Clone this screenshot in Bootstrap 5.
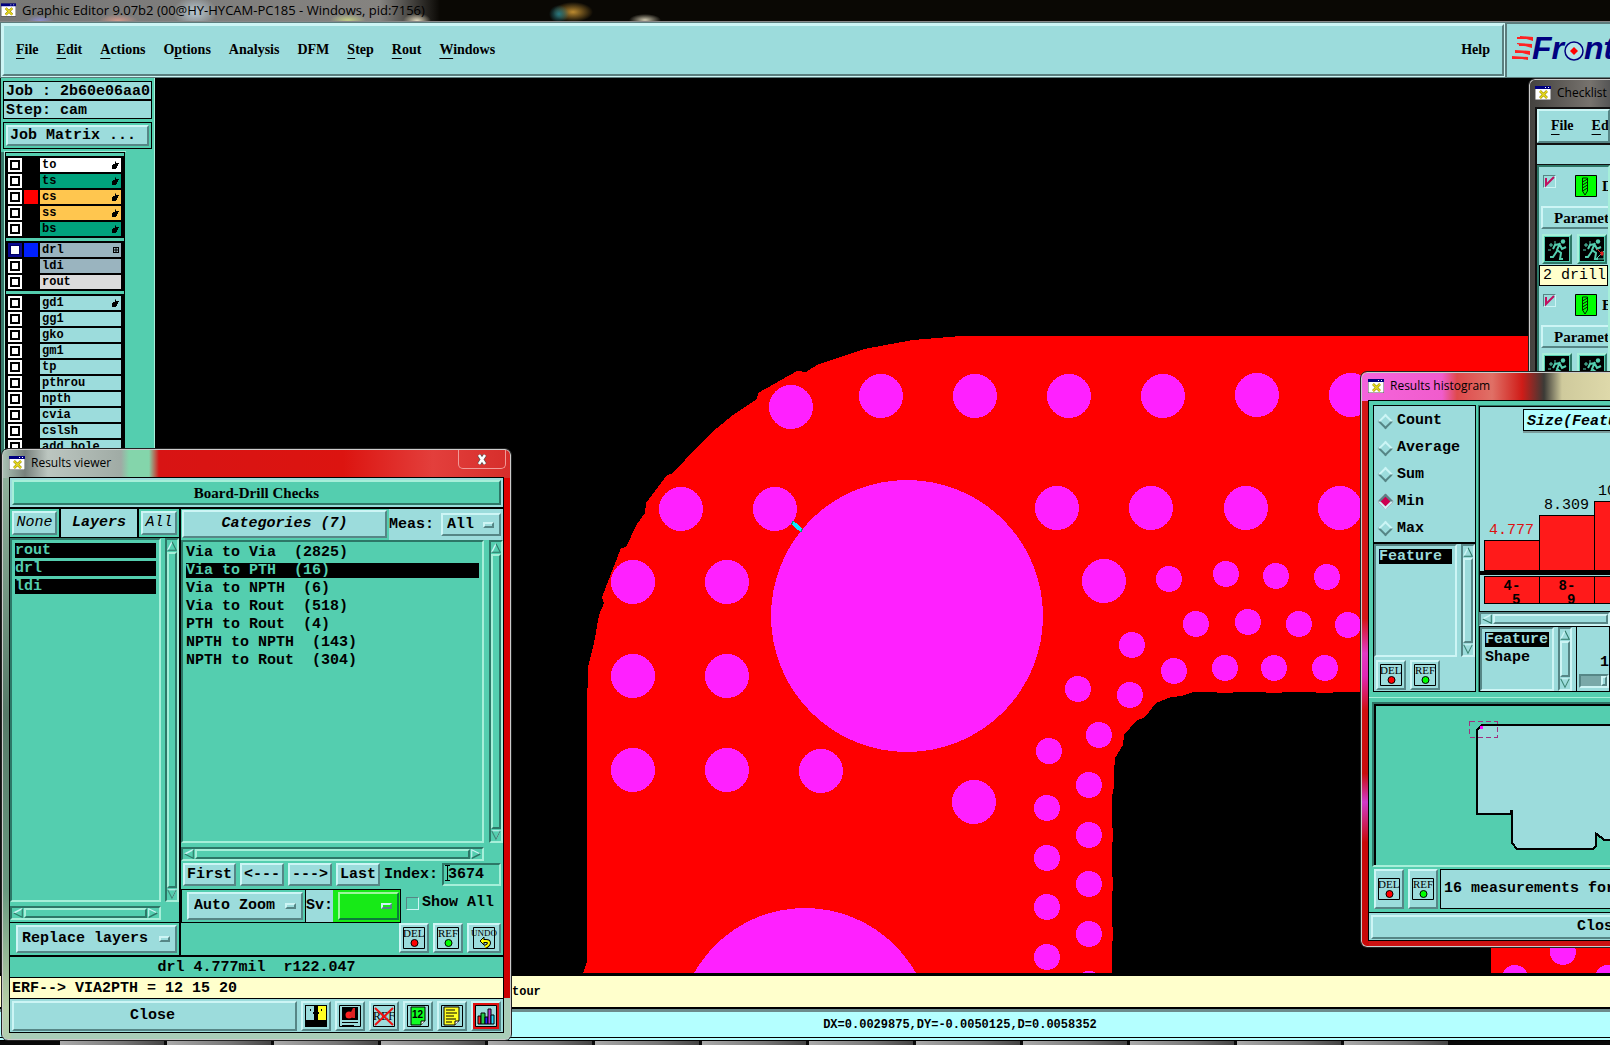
<!DOCTYPE html>
<html lang="en">
<head>
<meta charset="utf-8">
<meta name="viewport" content="width=device-width, initial-scale=1">
<title>Graphic Editor</title>
<link href="https://cdn.jsdelivr.net/npm/bootstrap@5.3.0/dist/css/bootstrap.min.css" rel="stylesheet">
<style>
:root{--teal:#54ceaf;--teal-lt:#a6efd9;--teal-dk:#2d7767;--cy:#9cdcdc;--cy-lt:#cdf5f5;--cy-dk:#568686;--cream:#ffffcc}
*{border-radius:0}
body{height:100vh;margin:0;overflow:hidden;background:#000;color:#000;font:bold 15px/18px "Liberation Mono",monospace;position:relative}
button,input,select{font:inherit;color:inherit;padding:0;margin:0}
a{color:inherit;text-decoration:none}
.serif{font:bold 14px/18px "Liberation Serif",serif}
.serif-lg{font:bold 15px/18px "Liberation Serif",serif}
.sys{font:13px/18px "Open Sans",sans-serif}
.menu-gap{gap:18px}
u{text-underline-offset:4px;text-decoration-thickness:1px}
.cyan{background:var(--cy)}
.teal{background:var(--teal)}
.cream{background:var(--cream)}
.up{border:2px solid;border-color:var(--cy-lt) var(--cy-dk) var(--cy-dk) var(--cy-lt);background:var(--cy)}
.up-t{border:2px solid;border-color:var(--teal-lt) var(--teal-dk) var(--teal-dk) var(--teal-lt);background:var(--teal)}
.down-t{border:2px solid;border-color:var(--teal-dk) var(--teal-lt) var(--teal-lt) var(--teal-dk);background:var(--teal)}
.down{border:2px solid;border-color:var(--cy-dk) var(--cy-lt) var(--cy-lt) var(--cy-dk);background:var(--cy)}
.line{border:1px solid #000}
.clip{overflow:hidden;min-width:0;min-height:0}
.tl{white-space:pre}
.fill{min-width:0;min-height:0;flex:1 1 0}
svg{display:block;flex:none}

/* main window */
.app-title{height:21px;padding:0 0 2px 1px;gap:6px;background:
 radial-gradient(14px 8px at 417px 21px,#e6dcc0,transparent),
 radial-gradient(16px 6px at 645px 20px,#cfc8b0,transparent),
 radial-gradient(10px 9px at 559px 14px,#267780,transparent),
 radial-gradient(20px 10px at 573px 12px,#bb8a30,transparent),
 radial-gradient(20px 7px at 118px 21px,#d59a8c,transparent),
 radial-gradient(14px 6px at 40px 21px,#8e8ed0,transparent),
 radial-gradient(18px 6px at 348px 20px,#c2cc85,transparent),
 radial-gradient(22px 16px at 195px 12px,#b9c9d2,transparent),
 linear-gradient(90deg,#777 0,#858380 380px,#0a0804 440px)}
.app-menu{height:57px;border-top:1px solid #888;background:#5c7c7c}
.app-menu .bar{border:2px solid;border-color:var(--cy-lt) #5a7f7f #5a7f7f var(--cy-lt);outline:1px solid var(--cy-lt);margin:2px 1px 2px 2px;padding:0 12px}
.logo-box{width:103px;margin:2px 0 1px 2px}
.side{width:155px;background:var(--teal);border-left:1px solid #111;padding:3px 2px 0;border-right:1px solid var(--teal-lt)}
.side .info{height:19px;flex:none;border:1px solid #000;padding-left:2px;line-height:19px}
.matrix{height:27px;padding:2px;margin-top:3px}
.matrix button{text-align:left;padding-left:2px;line-height:18px}
.layer-wrap{margin:3px -2px 0 -2px;background:#37796a;padding-left:4px}
.layer-pane{width:120px;padding:3px 0 0;border:1px solid #000;border-bottom:0;outline:1px solid var(--teal-lt)}
.layer-grp{background:#000;padding:2px;gap:2px;margin-bottom:3px}
.layer-grp label{height:14px;gap:2px;font-size:12px;line-height:15px}
.layer-grp label .tag{width:81px;padding:0 2px 0 2px;background:var(--cy)}
.layer-grp label .sw{width:14px}
.layer-grp input{appearance:none;width:14px;height:14px;border:2px solid #fff;background:linear-gradient(#fff,#fff) center/6px 6px no-repeat,#000}
.layer-grp input:checked{border-color:#0a0a90;background:linear-gradient(#fff,#fff) center/8px 8px no-repeat,#000066}
.l-white .tag{background:#fff!important}.l-green .tag{background:#00a37d!important}.l-org .tag{background:#ffc64f!important}
.l-gray .tag{background:#9ab4bf!important}.l-pale .tag{background:#dcdcdc!important}
.msg{height:31px;margin-top:3px;padding:0 0 0 512px;font-size:12px;line-height:32px}
.stat{height:32px;margin-top:2px;background:#b4ffff;border-top:3px solid #6c8c8c;border-bottom:4px double #000;font-size:12px;padding-left:310px}
.task{height:4px;padding-left:60px;gap:3px;background:#090909}
.task i{flex:0 0 104px;background:linear-gradient(90deg,#aaa,#777 60%,#444)}

/* floating windows */
.win{position:absolute;border-radius:6px;overflow:hidden;border:1px solid #ccc;outline:1px solid #222;display:flex;flex-direction:column}
.win .cap{height:27px;flex:none;gap:6px;padding-bottom:2px}
.win .cap.sys,.win .cap .sys{font-size:12px}
.w-res{left:2px;top:449px;bottom:5px;width:509px;padding:0 6px 6px;
 background:linear-gradient(#d00,#c00) right 0 top 28px/8px 520px no-repeat,
 linear-gradient(#8fb09a,#567a68 40%,#69987f 70%,#b8cfa8 90%,#a7cdb6) left 0 top 28px/8px 100% no-repeat,
 linear-gradient(90deg,#a9bfb2 0,#77807c 22px,#bcc6c0 45px,#a0aba5 118px,#84d5ab 126px,#84d5ab 146px,#d81414 156px,#dc1410 340px,#e33f3c 430px,#d62e2b) top/100% 28px no-repeat,#a9cdb8}
.w-chk{left:1529px;top:79px;right:0;height:330px;padding-left:5px;border-right:0;border-radius:6px 0 0 0;background:linear-gradient(90deg,#44423f,#77736e 60px,#555),#333;background-color:#222}
.w-his{left:1361px;top:372px;right:0;bottom:98px;padding:0 0 5px 6px;border-right:0;border-radius:6px 0 0 6px;
 background:linear-gradient(#d31616 0,#d31616 38%,#e23ac4 44%,#e028b4 48%,#d01010 54%,#c80c0c 65%,#d03ac8 70%,#c80808 77%) left 0 top 28px/7px 100% no-repeat,
 linear-gradient(90deg,#f564dc 0,#f05ccc 80px,#df4a4c 95px,#e07066 130px,#d01c18 160px,#3b3a36 182px,#cfca9c 200px,#ded9aa) top/100% 28px no-repeat,#cc1111}
.xbtn{width:48px;height:19px;border:1px solid #f09a98;border-top:0;border-radius:0 0 5px 5px;background:transparent;margin-right:-2px;align-self:flex-start}
.client{border:1px solid #000;background:#000;gap:2px}
.client.teal{background:var(--teal)}
.opt{position:relative}
.opt select{appearance:none;width:100%;height:100%;border:0;background:transparent;outline:0}
.opt::after{content:"";position:absolute;right:5px;top:50%;width:11px;height:6px;margin-top:-3px;border:2px solid;border-color:var(--cy-lt) var(--cy-dk) var(--cy-dk) var(--cy-lt);pointer-events:none}
.hl{background:#000;color:var(--teal)}
.items{margin:0;padding:3px 3px}
.items li{height:15px;line-height:15px;margin-bottom:3px;white-space:pre}
.w13{width:14px}.h13{height:14px}
.grn{background:#17ea17;border-color:#9df79d #0b7c3a #0b7c3a #9df79d}
.ic{width:30px;height:30px;display:flex;align-items:center;justify-content:center;flex:none}
.stats label{height:27px;gap:6px}
.dia{appearance:none;width:11px;height:11px;border:2px solid;border-color:var(--cy-lt) var(--cy-dk) var(--cy-dk) var(--cy-lt);transform:rotate(45deg)}
.dia:checked{background:#cc0050;border-color:var(--cy-dk) var(--cy-lt) var(--cy-lt) var(--cy-dk)}
.bar-red{background:#ff1a1a;border:1px solid #000;border-right-width:0;width:55px;flex:none}
.col-bar{width:55px;flex:none}
.val{font-weight:400}
.bin{height:28px;line-height:14px;font-size:14px;padding-top:2px}
.tick{appearance:none;width:13px;height:13px;border:1px solid;border-color:var(--cy-dk) var(--cy-lt) var(--cy-lt) var(--cy-dk)}
.idx{width:59px;outline:0}
.chk-row{height:37px;padding-left:4px;gap:19px}
.chk-row label{margin-left:-14px}
.chk-par{height:23px;padding-left:11px;line-height:18px;margin:2px 0 0 2px}
.chk-run{height:36px;gap:5px;padding:5px 0 0 3px}
</style>
<script src="https://cdn.jsdelivr.net/npm/bootstrap@5.3.0/dist/js/bootstrap.bundle.min.js"></script>
</head>
<body class="d-flex flex-column">
<svg width="0" height="0" class="position-absolute" aria-hidden="true">
 <symbol id="win" viewBox="0 0 16 14"><path d="M0 0h16v14H0z" fill="#fff" stroke="#555"/><path d="M0 0h16v3H0z" fill="#000080"/><path d="M10 1h1v1h-1zM13 1h1v1h-1z" fill="#fff"/><path d="M5 5l7 7M12 5l-7 7" stroke="#998800" stroke-width="2.500"/><path d="M5 5l7 7M12 5l-7 7" stroke="#e8dc20" stroke-width="1.500"/></symbol>
 <symbol id="hand" viewBox="0 0 8 8"><path d="M5 0v2h3v1H7v2H6v2H5v1H1V4h1V3h2V1z"/></symbol>
 <symbol id="grid" viewBox="0 0 6 6"><path d="M0 0h6v6H0z"/><path d="M1 1h1.500v1.500H1zM3.500 1H5v1.500H3.500zM1 3.500h1.500V5H1zM3.500 3.500H5V5H3.500z" fill="#9ab4bf"/></symbol>
 <symbol id="up" viewBox="0 0 14 14"><path d="M7 1L1 13" stroke="#cdf5f5" stroke-width="2"/><path d="M7 1l6 12H1" fill="none" stroke="#2d7767" stroke-width="1.500"/></symbol>
 <symbol id="dn" viewBox="0 0 14 14"><path d="M1 1h12L7 13" fill="none" stroke="#cdf5f5" stroke-width="1.500"/><path d="M1 1l6 12L13 1" fill="none" stroke="#3d8777" stroke-width="1.500"/></symbol>
 <symbol id="lf" viewBox="0 0 14 14"><path d="M13 1L1 7" stroke="#cdf5f5" stroke-width="2"/><path d="M13 1v12L1 7" fill="none" stroke="#2d7767" stroke-width="1.500"/></symbol>
 <symbol id="rt" viewBox="0 0 14 14"><path d="M1 13V1l12 6" fill="none" stroke="#cdf5f5" stroke-width="1.500"/><path d="M1 13l12-6" stroke="#2d7767" stroke-width="2"/></symbol>
 <symbol id="run" viewBox="0 0 24 24"><path d="M0 0h24v24H0z"/><path d="M15 6l-3 7 4 3-1 6h3M12 14l-4 6H5M15 7l-5 1-2 4M15 8l2 4 4-2" fill="none" stroke="#54ceaf" stroke-width="2"/><circle cx="18" cy="4.500" r="2.200" fill="#54ceaf"/><path d="M4 8h4M6 6v4M10 4v3M3 13h3" stroke="#54ceaf"/></symbol>
 <symbol id="drill" viewBox="0 0 22 22"><path d="M.500.500h21v21H.500z" fill="#0f0" stroke="#000"/><path d="M7.500 3h5v13l-2.500 4-2.500-4zM7.500 7l5-3M7.500 10l5-3M7.500 13l5-3M7.500 16l5-3" fill="none" stroke="#020"/></symbol>
</svg>

<header class="app-title d-flex align-items-center sys flex-shrink-0"><svg width="15" height="14"><use href="#win"/></svg><span class="text-nowrap">Graphic Editor 9.07b2 (00@HY-HYCAM-PC185 - Windows, pid:7156)</span></header>
<nav class="app-menu d-flex flex-shrink-0 serif">
 <div class="bar cyan flex-grow-1 d-flex align-items-center menu-gap">
  <a href="#"><u>F</u>ile</a><a href="#"><u>E</u>dit</a><a href="#"><u>A</u>ctions</a><a href="#">O<u>p</u>tions</a><a href="#">Analysis</a><a href="#">DFM</a><a href="#"><u>S</u>tep</a><a href="#"><u>R</u>out</a><a href="#"><u>W</u>indows</a><a href="#" class="ms-auto">Help</a>
 </div>
 <div class="logo-box cyan clip"><svg width="103" height="52" viewBox="0 0 103 52"><path d="M26 13L13 12v1l13 4zM25 20L10 19v1l15 4zM23 27L8 26v1l15 4zM21 33L5 32v1l16 3z" fill="#f22"/><path d="M10 14h16M12 21h12M8 28h14M5 34h16" stroke="#f22" stroke-width="2"/><text x="25" y="35" font-family="Liberation Sans,sans-serif" font-weight="700" font-style="italic" font-size="32" fill="#000080">Fr</text><circle cx="67" cy="27" r="9" fill="#b4e4e8" stroke="#000080" stroke-width="1.500"/><path d="M67 23l4 4-4 4-4-4z" fill="#f00"/><text x="77" y="35" font-family="Liberation Sans,sans-serif" font-weight="700" font-style="italic" font-size="32" fill="#000080">nt</text></svg></div>
</nav>

<main class="d-flex fill">
 <aside class="side d-flex flex-column flex-shrink-0 clip">
  <div class="info cyan tl">Job : 2b60e06aa0</div>
  <div class="info cyan tl">Step: cam</div>
  <div class="matrix line teal d-flex flex-shrink-0"><button type="button" class="up flex-grow-1">Job Matrix ...</button></div>
  <div class="layer-wrap d-flex fill">
   <div class="layer-pane teal clip">
    <div class="layer-grp d-flex flex-column">
     <label class="d-flex l-white"><input type="checkbox"><span class="sw"></span><span class="tag d-flex align-items-center">to<svg class="ms-auto" width="8" height="8"><use href="#hand"/></svg></span></label>
     <label class="d-flex l-green"><input type="checkbox"><span class="sw"></span><span class="tag d-flex align-items-center">ts<svg class="ms-auto" width="8" height="8"><use href="#hand"/></svg></span></label>
     <label class="d-flex l-org"><input type="checkbox"><span class="sw" style="background:#f00"></span><span class="tag d-flex align-items-center">cs<svg class="ms-auto" width="8" height="8"><use href="#hand"/></svg></span></label>
     <label class="d-flex l-org"><input type="checkbox"><span class="sw"></span><span class="tag d-flex align-items-center">ss<svg class="ms-auto" width="8" height="8"><use href="#hand"/></svg></span></label>
     <label class="d-flex l-green"><input type="checkbox"><span class="sw"></span><span class="tag d-flex align-items-center">bs<svg class="ms-auto" width="8" height="8"><use href="#hand"/></svg></span></label>
    </div>
    <div class="layer-grp d-flex flex-column">
     <label class="d-flex l-gray"><input type="checkbox" checked><span class="sw" style="background:#0020ff"></span><span class="tag d-flex align-items-center">drl<svg class="ms-auto" width="6" height="6"><use href="#grid"/></svg></span></label>
     <label class="d-flex l-gray"><input type="checkbox"><span class="sw"></span><span class="tag">ldi</span></label>
     <label class="d-flex l-pale"><input type="checkbox"><span class="sw"></span><span class="tag">rout</span></label>
    </div>
    <div class="layer-grp d-flex flex-column">
     <label class="d-flex"><input type="checkbox"><span class="sw"></span><span class="tag d-flex align-items-center">gd1<svg class="ms-auto" width="8" height="8"><use href="#hand"/></svg></span></label>
     <label class="d-flex"><input type="checkbox"><span class="sw"></span><span class="tag">gg1</span></label>
     <label class="d-flex"><input type="checkbox"><span class="sw"></span><span class="tag">gko</span></label>
     <label class="d-flex"><input type="checkbox"><span class="sw"></span><span class="tag">gm1</span></label>
     <label class="d-flex"><input type="checkbox"><span class="sw"></span><span class="tag">tp</span></label>
     <label class="d-flex"><input type="checkbox"><span class="sw"></span><span class="tag">pthrou</span></label>
     <label class="d-flex"><input type="checkbox"><span class="sw"></span><span class="tag">npth</span></label>
     <label class="d-flex"><input type="checkbox"><span class="sw"></span><span class="tag">cvia</span></label>
     <label class="d-flex"><input type="checkbox"><span class="sw"></span><span class="tag">cslsh</span></label>
     <label class="d-flex"><input type="checkbox"><span class="sw"></span><span class="tag">add_hole</span></label>
    </div>
   </div>
   <div class="teal flex-grow-1"></div>
  </div>
 </aside>
 <svg class="fill h-100" viewBox="155 78 1455 895" preserveAspectRatio="xMinYMin slice" shape-rendering="crispEdges">
  <path fill="#f00" d="M1610 336H961L913 340 864 349 817 365 806 372 797 371 758 393 757 399 733 415 717 428 697 447 673 473 667 475 646 503 645 513 637 524 626 547 621 548 602 597 604 603 599 615 594 643 588 667 587 710V962L583 974H1112V943Q1115 934 1112 925V893Q1115 884 1112 875V844Q1115 835 1112 826V797Q1115 785 1114 773L1115 758 1123 745 1124 735 1136 721 1145 717 1156 703 1171 697 1182 696 1193 692H1215Q1225 695 1235 692H1264Q1274 695 1284 692H1314Q1325 695 1335 692H1610z"/>
  <path fill="#f00" d="M1491 900h119v74h-119z"/>
  <g fill="#ff20ff">
   <circle cx="907" cy="616" r="136"/><circle cx="805" cy="1035" r="127"/>
   <circle cx="791" cy="407" r="22"/><circle cx="881" cy="396" r="22"/><circle cx="975" cy="396" r="22"/><circle cx="1069" cy="396" r="22"/><circle cx="1163" cy="396" r="22"/><circle cx="1257" cy="395" r="22"/><circle cx="1351" cy="395" r="22"/>
   <circle cx="681" cy="509" r="22"/><circle cx="775" cy="509" r="22"/><circle cx="1057" cy="508" r="22"/><circle cx="1151" cy="508" r="22"/><circle cx="1246" cy="508" r="22"/><circle cx="1340" cy="508" r="22"/>
   <circle cx="633" cy="582" r="22"/><circle cx="727" cy="582" r="22"/><circle cx="633" cy="676" r="22"/><circle cx="727" cy="676" r="22"/><circle cx="633" cy="770" r="22"/><circle cx="727" cy="770" r="22"/><circle cx="821" cy="771" r="22"/><circle cx="974" cy="802" r="22"/><circle cx="1104" cy="581" r="22"/>
   <circle cx="1169" cy="579" r="13"/><circle cx="1226" cy="574" r="13"/><circle cx="1276" cy="576" r="13"/><circle cx="1327" cy="577" r="13"/>
   <circle cx="1196" cy="624" r="13"/><circle cx="1248" cy="622" r="13"/><circle cx="1299" cy="624" r="13"/><circle cx="1348" cy="625" r="13"/>
   <circle cx="1132" cy="645" r="13"/><circle cx="1174" cy="671" r="13"/><circle cx="1225" cy="668" r="13"/><circle cx="1274" cy="668" r="13"/><circle cx="1325" cy="668" r="13"/>
   <circle cx="1078" cy="689" r="13"/><circle cx="1130" cy="695" r="13"/><circle cx="1099" cy="735" r="13"/><circle cx="1049" cy="751" r="13"/>
   <circle cx="1089" cy="785" r="13"/><circle cx="1047" cy="808" r="13"/><circle cx="1089" cy="835" r="13"/><circle cx="1047" cy="858" r="13"/><circle cx="1089" cy="884" r="13"/><circle cx="1047" cy="907" r="13"/><circle cx="1089" cy="934" r="13"/><circle cx="1047" cy="957" r="13"/><circle cx="1089" cy="984" r="13"/>
   <circle cx="1563" cy="952" r="13"/><circle cx="1515" cy="978" r="13"/><circle cx="1608" cy="978" r="13"/>
  </g>
  <path d="M792 522l10 9" stroke="#00a870" stroke-width="3"/><path d="M793 523l8 7" stroke="#10e8ff" stroke-width="4"/>
 </svg>
</main>
<div class="msg cream flex-shrink-0">tour</div>
<div class="stat d-flex align-items-center justify-content-center flex-shrink-0">DX=0.0029875,DY=-0.0050125,D=0.0058352</div>
<footer class="task d-flex flex-shrink-0 clip"><i></i><i></i><i></i><i></i><i></i><i></i><i></i><i></i><i></i><i></i><i></i><i></i><i></i></footer>

<!-- Checklist -->
<section class="win w-chk">
 <div class="cap d-flex align-items-center sys"><svg width="16" height="14"><use href="#win"/></svg><span>Checklist</span></div>
 <div class="d-flex flex-column clip flex-grow-1" style="background:#111;padding:2px 0 0 2px">
  <nav class="up serif d-flex align-items-center menu-gap flex-shrink-0 clip" style="height:34px;padding-left:12px"><a href="#"><u>F</u>ile</a><a href="#"><u>E</u>dit</a></nav>
  <div class="cyan flex-shrink-0" style="height:19px;margin:2px 0 1px"></div>
  <div class="down-t clip flex-grow-1" style="background:var(--cy)">
   <div class="chk-row d-flex align-items-center serif-lg"><span class="position-relative mb-2"><input class="tick d-block" type="checkbox" id="c1" checked><svg class="position-absolute top-0 start-0" width="13" height="13"><path d="M3 3v7l8-8" fill="none" stroke="#c01060" stroke-width="2"/></svg></span><svg width="22" height="22"><use href="#drill"/></svg><label for="c1">Drill</label></div>
   <button type="button" class="chk-par up serif-lg w-100 text-start clip d-block">Parameters</button>
   <div class="chk-run d-flex"><button type="button" class="up-t ic" aria-label="Run"><svg width="24" height="24"><use href="#run"/></svg></button><button type="button" class="up-t ic" aria-label="Run area"><svg width="24" height="24"><use href="#run"/><path d="M24 14l-8 8h8z" fill="none" stroke="#54ceaf"/><path d="M17 12l6 6M21 15h2v3h-2z" fill="#d22" stroke="#d22"/></svg></button></div>
   <div class="cream line tl" style="height:21px;font-weight:400;padding-left:3px;line-height:19px">2 drill</div>
   <div class="chk-row d-flex align-items-center serif-lg"><span class="position-relative mb-2"><input class="tick d-block" type="checkbox" id="c2" checked><svg class="position-absolute top-0 start-0" width="13" height="13"><path d="M3 3v7l8-8" fill="none" stroke="#c01060" stroke-width="2"/></svg></span><svg width="22" height="22"><use href="#drill"/></svg><label for="c2">Board</label></div>
   <button type="button" class="chk-par up serif-lg w-100 text-start clip d-block">Parameters</button>
   <div class="chk-run d-flex"><button type="button" class="up-t ic" aria-label="Run"><svg width="24" height="24"><use href="#run"/></svg></button><button type="button" class="up-t ic" aria-label="Run area"><svg width="24" height="24"><use href="#run"/></svg></button></div>
  </div>
 </div>
</section>

<!-- Results histogram -->
<section class="win w-his">
 <div class="cap d-flex align-items-center sys"><svg width="16" height="14"><use href="#win"/></svg><span>Results histogram</span></div>
 <div class="client teal fill d-flex flex-column clip" style="gap:0;border-right:0">
  <div class="d-flex flex-shrink-0" style="height:297px;padding:4px 0 5px 4px;gap:2px;border-bottom:1px solid var(--teal-lt)">
   <div class="line cyan d-flex flex-column flex-shrink-0" style="width:103px">
    <div class="stats d-flex flex-column" style="height:138px;padding:2px 0 0 6px;border-bottom:2px solid #000">
     <label class="d-flex align-items-center"><input class="dia" type="radio" name="st">Count</label>
     <label class="d-flex align-items-center"><input class="dia" type="radio" name="st">Average</label>
     <label class="d-flex align-items-center"><input class="dia" type="radio" name="st">Sum</label>
     <label class="d-flex align-items-center"><input class="dia" type="radio" name="st" checked>Min</label>
     <label class="d-flex align-items-center"><input class="dia" type="radio" name="st">Max</label>
    </div>
    <div class="d-flex fill" style="gap:4px">
     <ul class="items list-unstyled down fill"><li class="hl" style="color:var(--cy)">Feature</li></ul>
     <div class="down w13 d-flex flex-column"><svg width="10" height="12"><use href="#up"/></svg><div class="up fill"></div><svg width="10" height="12"><use href="#dn"/></svg></div>
    </div>
    <div class="d-flex" style="gap:4px;padding:3px 2px 1px"><button type="button" class="up ic" aria-label="DEL"><svg width="24" height="24"><path d="M1.500 1.500h21v21h-21z" fill="none" stroke="#000"/><text x="1" y="11" font-family="Liberation Serif,serif" font-weight="400" font-size="11">DEL</text><circle cx="12.500" cy="17" r="3.500" fill="#f00" stroke="#000"/></svg></button><button type="button" class="up ic" aria-label="REF"><svg width="24" height="24"><path d="M1.500 1.500h21v21h-21z" fill="none" stroke="#000"/><text x="2" y="11" font-family="Liberation Serif,serif" font-weight="400" font-size="11">REF</text><circle cx="12.500" cy="17" r="3.500" fill="#0f0" stroke="#000"/></svg></button></div>
   </div>
   <div class="fill d-flex flex-column" style="background:var(--teal-dk);padding:1px 0 0 1px">
    <div class="cyan line d-flex flex-column clip" style="height:206px;border-right:0">
     <div class="d-flex" style="height:25px;padding:2px 0 0 43px"><div class="line text-nowrap fst-italic flex-shrink-0" style="background:#b4ffff;width:140px;height:22px;padding:3px 3px 0;box-shadow:0 2px 0 #7a9a9a">Size(Feature)</div></div>
     <div class="d-flex align-items-end flex-grow-1" style="padding-left:4px;border-bottom:4px solid #000">
      <div class="col-bar text-center"><div class="val" style="color:#d11">4.777</div><div class="bar-red" style="height:31px"></div></div>
      <div class="col-bar text-center"><div class="val">8.309</div><div class="bar-red" style="height:56px"></div></div>
      <div class="col-bar"><div class="val ps-1">10.</div><div class="bar-red" style="height:70px"></div></div>
     </div>
     <div class="d-flex" style="padding:1px 0 7px 4px"><div class="bar-red bin text-center tl">4-
 5</div><div class="bar-red bin text-center tl">8-
 9</div><div class="bar-red bin"></div></div>
    </div>
    <div class="down d-flex" style="height:14px"><svg width="12" height="10"><use href="#lf"/></svg><div class="up fill"></div></div>
    <div class="cyan d-flex flex-grow-1" style="border:1px solid #000;gap:4px">
     <ul class="items list-unstyled down flex-shrink-0" style="width:74px"><li class="hl" style="color:var(--cy)">Feature</li><li>Shape</li></ul>
     <div class="down w13 d-flex flex-column flex-shrink-0"><svg width="10" height="12"><use href="#up"/></svg><div class="up fill"></div><svg width="10" height="12"><use href="#dn"/></svg></div>
     <div class="fill d-flex flex-column justify-content-end clip" style="border-left:1px solid #000"><div style="padding-left:23px">1.</div><div class="down d-flex flex-shrink-0" style="height:14px;margin:2px 0 3px 2px;background:#7aa9a9"><div class="up" style="width:40px;margin-left:20px"></div></div></div>
    </div>
   </div>
  </div>
  <div class="down-t fill" style="margin:4px 0 2px 3px;border-right:0"><svg width="100%" height="100%" viewBox="1375 704 234 155" preserveAspectRatio="xMinYMin slice" shape-rendering="crispEdges"><path d="M1376 865V705h240" fill="none" stroke="#000" stroke-width="2"/><path d="M1620 724H1479l-5 5v81h33v-3h1v31l5 6h72l4-4v-11l8 6h23z" fill="#9cdcdc" stroke="#000" stroke-width="2"/><path d="M1467 721h27v15h-27z" fill="none" stroke="#a03080" stroke-dasharray="5 3"/><path d="M1477 725h3v3h-3z" fill="#f0f"/></svg></div>
  <div class="d-flex flex-shrink-0" style="height:43px;padding:0 0 3px 5px;gap:4px">
   <button type="button" class="up ic h-auto" aria-label="DEL"><svg width="24" height="24"><path d="M1.500 1.500h21v21h-21z" fill="none" stroke="#000"/><text x="1" y="11" font-family="Liberation Serif,serif" font-weight="400" font-size="11">DEL</text><circle cx="12.500" cy="17" r="3.500" fill="#f00" stroke="#000"/></svg></button><button type="button" class="up ic h-auto" aria-label="REF"><svg width="24" height="24"><path d="M1.500 1.500h21v21h-21z" fill="none" stroke="#000"/><text x="2" y="11" font-family="Liberation Serif,serif" font-weight="400" font-size="11">REF</text><circle cx="12.500" cy="17" r="3.500" fill="#0f0" stroke="#000"/></svg></button>
   <div class="line cyan fill clip tl" style="line-height:38px;padding-left:3px;border-right:0;margin-left:-2px">16 measurements for</div>
  </div>
  <div class="cyan flex-shrink-0" style="height:28px;border-top:1px solid #000;padding:2px 0 1px 2px"><button type="button" class="up w-100 h-100 d-block text-start clip" style="line-height:20px;padding-left:204px;border-right:0">Close</button></div>
 </div>
</section>

<!-- Results viewer -->
<section class="win w-res">
 <div class="cap d-flex align-items-center"><svg width="16" height="14"><use href="#win"/></svg><span class="sys">Results viewer</span><button type="button" class="xbtn ms-auto d-flex justify-content-center align-items-center" aria-label="Close window"><svg width="12" height="11"><path d="M3 1l6 9M9 1L3 10" stroke="#555" stroke-width="4"/><path d="M3 1l6 9M9 1L3 10" stroke="#fff" stroke-width="2.500"/></svg></button></div>
 <div class="client fill d-flex flex-column">
  <div class="cyan flex-shrink-0" style="padding:2px"><div class="up-t serif-lg text-center" style="height:25px;line-height:22px">Board-Drill Checks</div></div>
  <div class="d-flex fill" style="gap:2px">
   <div class="d-flex flex-column flex-shrink-0" style="width:169px;gap:1px">
    <div class="d-flex flex-shrink-0" style="height:28px;gap:2px">
     <div class="teal fst-italic fw-normal" style="padding:2px"><button type="button" class="up h-100" style="width:45px;font-style:italic;font-weight:400">None</button></div>
     <div class="cyan fill fst-italic text-center" style="line-height:28px">Layers</div>
     <div class="teal" style="padding:2px"><button type="button" class="up h-100" style="width:36px;font-style:italic;font-weight:400">All</button></div>
    </div>
    <div class="teal fill d-flex flex-column" style="gap:4px;padding-bottom:2px">
     <div class="d-flex fill" style="gap:4px">
      <ul class="items list-unstyled down-t fill"><li class="hl">rout</li><li class="hl">drl</li><li class="hl">ldi</li></ul>
      <div class="down-t w13 d-flex flex-column"><svg width="10" height="12"><use href="#up"/></svg><div class="up-t fill"></div><svg width="10" height="12"><use href="#dn"/></svg></div>
     </div>
     <div class="down-t h13 d-flex" style="margin-right:18px"><svg width="12" height="10"><use href="#lf"/></svg><div class="up-t fill"></div><svg width="12" height="10"><use href="#rt"/></svg></div>
    </div>
    <div class="teal flex-shrink-0" style="height:32px;padding:2px 2px 2px 6px"><div class="up opt h-100"><select aria-label="Layer mode" style="padding-left:4px"><option>Replace layers</option></select></div></div>
   </div>
   <div class="teal fill d-flex flex-column">
    <div class="cyan d-flex flex-shrink-0" style="height:31px">
     <div class="teal" style="padding:1px 2px 2px 1px;width:208px"><button type="button" class="up w-100 h-100 fst-italic fw-bold">Categories (7)</button></div>
     <label for="meas" class="flex-grow-1" style="line-height:31px">Meas:</label>
     <div class="up opt my-1" style="width:60px;margin-right:2px"><select id="meas" style="padding-left:4px"><option>All</option></select></div>
    </div>
    <div class="d-flex fill" style="gap:5px">
     <ul class="items list-unstyled down-t fill"><li>Via to Via  (2825)</li><li class="hl">Via to PTH  (16)</li><li>Via to NPTH  (6)</li><li>Via to Rout  (518)</li><li>PTH to Rout  (4)</li><li>NPTH to NPTH  (143)</li><li>NPTH to Rout  (304)</li></ul>
     <div class="down-t w13 d-flex flex-column"><svg width="10" height="12"><use href="#up"/></svg><div class="up-t fill"></div><svg width="10" height="12"><use href="#dn"/></svg></div>
    </div>
    <div class="down-t h13 d-flex flex-shrink-0" style="margin:4px 19px 2px 0"><svg width="12" height="10"><use href="#lf"/></svg><div class="up-t fill"></div><svg width="12" height="10"><use href="#rt"/></svg></div>
    <div class="d-flex flex-shrink-0" style="height:24px;gap:4px;padding:0 2px 1px">
     <button type="button" class="up" style="width:53px">First</button><button type="button" class="up" style="width:44px">&lt;---</button><button type="button" class="up" style="width:44px">---&gt;</button><button type="button" class="up" style="width:44px">Last</button><label for="idx" class="flex-grow-1" style="line-height:24px">Index:</label><span class="position-relative d-flex"><input id="idx" class="down-t idx" value="3674" style="padding-left:4px"><svg class="position-absolute top-0 start-0" style="margin:2px 0 0 3px" width="5" height="16"><path d="M0 .500h5M2.500 0v16M0 15.500h5" stroke="#000"/></svg></span>
    </div>
    <div class="d-flex flex-shrink-0 align-items-start" style="height:34px;margin-top:2px">
     <div class="d-flex line h-100">
      <div class="teal" style="padding:2px 2px 2px 5px;border-right:1px solid #000"><div class="up opt h-100" style="width:116px"><select aria-label="Zoom mode" style="padding-left:5px"><option>Auto Zoom</option></select></div></div>
      <label for="sv" class="cyan" style="width:27px;line-height:31px">Sv:</label>
      <div style="background:#17ea17;padding:2px 1px 2px 5px"><div class="up grn opt h-100" style="width:61px"><select id="sv"><option></option></select></div></div>
     </div>
     <label class="d-flex align-items-center" style="gap:3px;padding:5px 0 0 5px"><input class="tick" type="checkbox">Show All</label>
    </div>
    <div class="d-flex justify-content-end flex-shrink-0" style="height:32px;gap:4px;padding:0 2px">
     <button type="button" class="up ic" aria-label="DEL"><svg width="24" height="24"><path d="M1.500 1.500h21v21h-21z" fill="none" stroke="#000"/><text x="1" y="11" font-family="Liberation Serif,serif" font-weight="400" font-size="11">DEL</text><circle cx="12.500" cy="17" r="3.500" fill="#f00" stroke="#000"/></svg></button><button type="button" class="up ic" aria-label="REF"><svg width="24" height="24"><path d="M1.500 1.500h21v21h-21z" fill="none" stroke="#000"/><text x="2" y="11" font-family="Liberation Serif,serif" font-weight="400" font-size="11">REF</text><circle cx="12.500" cy="17" r="3.500" fill="#0f0" stroke="#000"/></svg></button><button type="button" class="up ic" style="width:34px" aria-label="UNDO"><svg width="28" height="24"><path d="M3.500 1.500h21v21h-21z" fill="none" stroke="#000"/><text x="1" y="10" font-family="Liberation Serif,serif" font-weight="400" font-size="9">UNDO</text><path d="M12 15h4q3 0 3 2t-4 4" fill="none" stroke="#000" stroke-width="4"/><path d="M10 15l4-4v8z" stroke="#000" fill="#ff0"/><path d="M13 15h3q3 0 3 2t-4 4" fill="none" stroke="#ff0" stroke-width="2"/></svg></button>
    </div>
   </div>
  </div>
  <div class="teal text-center tl flex-shrink-0" style="height:20px;line-height:21px">drl 4.777mil  r122.047</div>
  <div class="cream tl flex-shrink-0" style="height:20px;line-height:21px;padding-left:2px;margin-top:-1px">ERF--&gt; VIA2PTH = 12 15 20</div>
  <div class="cyan d-flex flex-shrink-0" style="height:33px;margin-top:-1px;gap:4px;padding:2px 2px 1px">
   <button type="button" class="up fill" style="padding-right:4px">Close</button>
   <button type="button" class="up ic" aria-label="Highlight"><svg width="22" height="22"><path d="M0 0h22v22H0z"/><path d="M1 1h8v14H1z" fill="#9cdcdc"/><path d="M13 1h8v14h-8z" fill="#ff2"/><path d="M8 7h6v2H8zM9 9h4v6H9zM7 15h8v2H7z"/><path d="M5 4h1v2H5zM16 4h1v2h-1z"/></svg></button>
   <button type="button" class="up ic" aria-label="Snapshot"><svg width="22" height="22"><path d="M.500.500h21v21H.500z" fill="#9cdcdc" stroke="#000"/><path d="M3 2h16v13H3zM3 17h16v1H3zM3 20h12v1H3z"/><circle cx="10" cy="10" r="3.500" fill="#f22"/><path d="M14 3h2v10h-2l-4-2z" fill="#d22"/></svg></button>
   <button type="button" class="up ic" aria-label="No reference"><svg width="24" height="22"><path d="M1.500.500h21v21h-21z" fill="none" stroke="#000"/><text x="1" y="15" font-family="Liberation Serif,serif" font-weight="400" font-size="12">REF</text><path d="M3 3l18 17M21 3L3 20" stroke="#e11" stroke-width="2"/></svg></button>
   <button type="button" class="up ic" aria-label="Numbers"><svg width="22" height="22"><path d="M.500.500h21v21H.500z" fill="#9cdcdc" stroke="#000"/><path d="M4 2h14v14l-4 4H4z" fill="#1f2" stroke="#000"/><path d="M18 16h-4v4" fill="#fff" stroke="#000"/><text x="5" y="13" font-size="10" font-family="Liberation Sans,sans-serif">12</text></svg></button>
   <button type="button" class="up ic" aria-label="Report"><svg width="22" height="22"><path d="M.500.500h21v21H.500z" fill="#9cdcdc" stroke="#000"/><path d="M3 2h15v14l-4 4H3z" fill="#ff2" stroke="#000"/><path d="M18 16h-4v4" fill="#fff" stroke="#000"/><path d="M5 5h9M5 8h11M5 11h8M5 14h10M5 17h6" stroke="#000"/></svg></button>
   <button type="button" class="up ic" style="background:#e01010" aria-label="Histogram"><svg width="22" height="22"><path d="M.500.500h21v21H.500z" fill="#9cdcdc" stroke="#000"/><g stroke="#000"><path d="M3 11h3v8H3z" fill="#f22"/><path d="M6 8h4v11H6z" fill="#2c4"/><path d="M10 12h3v7h-3z" fill="#22f"/><path d="M13 4h3v15h-3z" fill="#b3c"/><path d="M16 10h3v9h-3z" fill="#2df"/></g></svg></button>
  </div>
 </div>
</section>
</body>
</html>
